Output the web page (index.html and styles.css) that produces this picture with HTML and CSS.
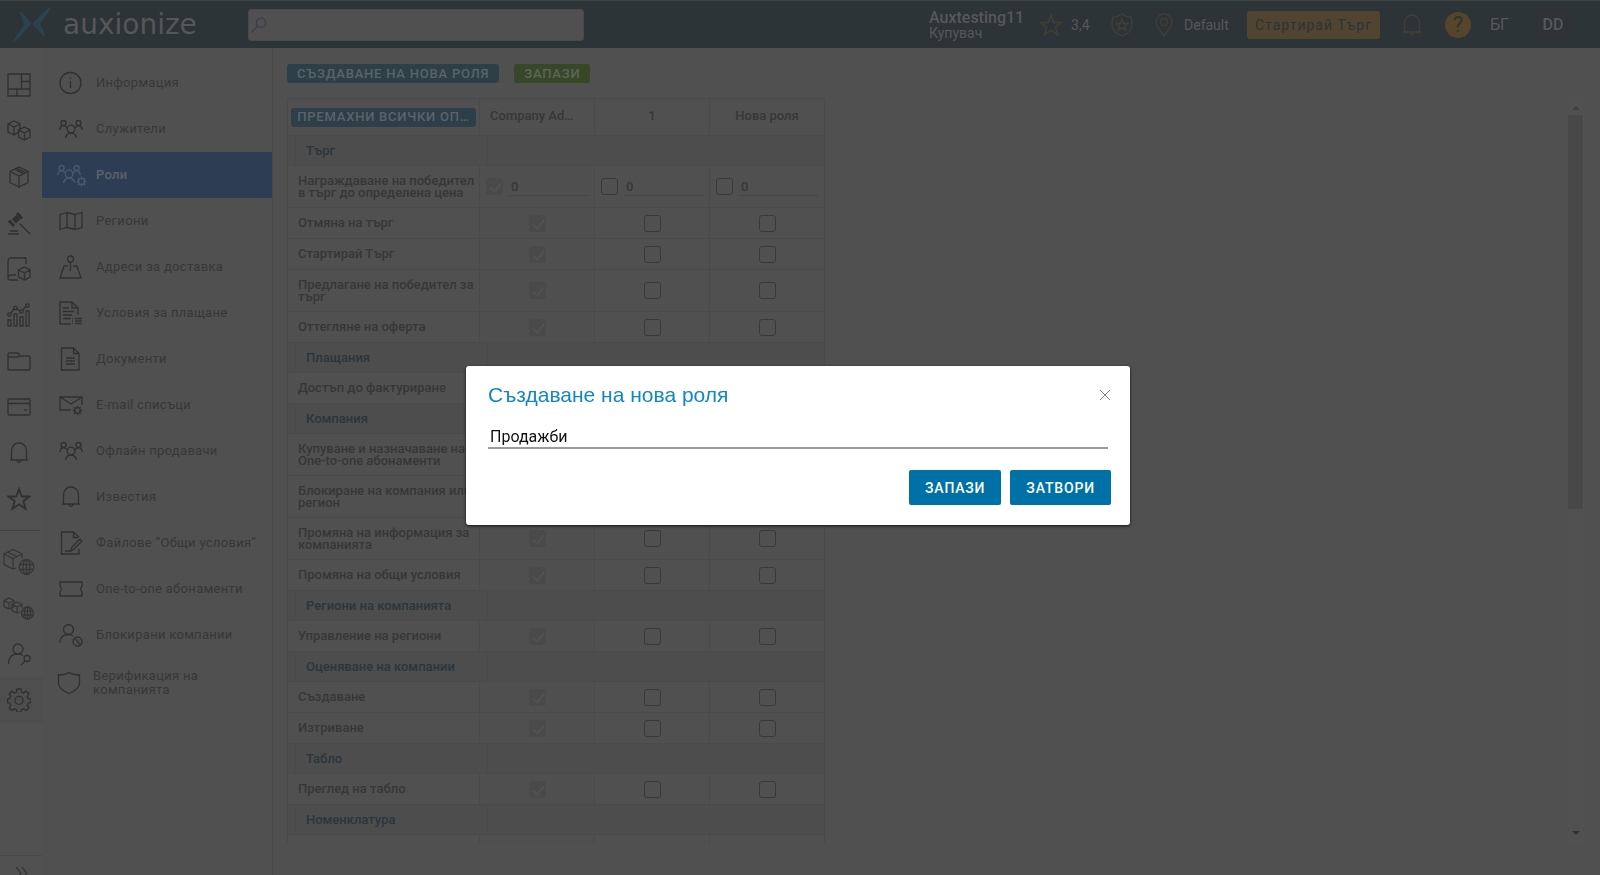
FILE: index.html
```html
<!DOCTYPE html>
<html lang="bg">
<head>
<meta charset="utf-8">
<title>Auxionize – Роли</title>
<link rel="stylesheet" href="styles.css">
</head>
<body>
<svg class="sprite" aria-hidden="true">
  <symbol id="i-grid" viewBox="0 0 24 24"><path d="M1 1h22v22H1zM14.500 1v15M1 16h22M14.500 8.500H23M10 16v7"/></symbol>
  <symbol id="i-cube" viewBox="0 0 24 24"><path d="M12 2l9 4.500v11L12 22l-9-4.500v-11zM3 6.500l9 4.500 9-4.500M12 11v11M7.500 4.200l9 4.500M9.500 3.200l9 4.500"/></symbol>
  <symbol id="i-cubes" viewBox="0 0 24 24"><path d="M7 2l6 3v7l-6 4-6-3V5zM1 5l6 3 6-3M7 8v8M17.500 8l5.500 3v7l-5.500 3-6-3v-7zM11.500 11l6 3 5.500-3M17.500 14v7"/></symbol>
  <symbol id="i-gavel" viewBox="0 0 24 24"><path d="M12.500 12.500L23 23M3 20h8M1 23h11"/><path class="thick" d="M2 9.500l5 5.500M10 2l5 5.500"/><path class="solid" d="M5 8l4.500-4 4 4L9 12.500z"/></symbol>
  <symbol id="i-catalog" viewBox="0 0 24 24"><path d="M19 7V1H4Q1 1 1 4v17q0 2 2 2h8M1 20q1-2 3-2h5M17.500 10l5.500 3v7l-5.500 3-6-3v-7zM11.500 13l6 3 5.500-3M17.500 16v7"/></symbol>
  <symbol id="i-chart" viewBox="0 0 24 24"><path d="M1 17h3v6H1zM7 11h3v12H7zM13 14h3v9h-3zM19 8h3v15h-3zM4 10l3-4M10 6l3 2M16 7l3-4"/><circle cx="2.500" cy="11.500" r="1.700"/><circle cx="8.500" cy="5" r="1.700"/><circle cx="14.500" cy="8.500" r="1.700"/><circle cx="20.500" cy="2.500" r="1.700"/></symbol>
  <symbol id="i-folder" viewBox="0 0 24 24"><path d="M1 20V5q0-1 1-1h9l2 3h9q1 0 1 1v12q0 1-1 1H2q-1 0-1-1zM1 8h10l2-1"/></symbol>
  <symbol id="i-card" viewBox="0 0 24 24"><rect x="1" y="4" width="22" height="16" rx="1"/><path d="M1 8.500h22M17 15h3"/></symbol>
  <symbol id="i-bell" viewBox="0 0 24 24"><path d="M4.500 19V9.500a7.500 7.500 0 0 1 15 0V19M3 19h18M10 19.500q2 4 4 0"/></symbol>
  <symbol id="i-star" viewBox="0 0 24 24"><path d="M12 2l2.700 7.500H22.500l-6.200 4.700 2.300 7.600-6.600-4.500-6.600 4.500 2.300-7.600L1.500 9.500h7.800z"/></symbol>
  <symbol id="i-cubeweb" viewBox="0 0 32 28"><path d="M10 1.500l9 4.500v4M13 20l-3 1-9-4.500V6l9-4.500M1 6l9 4.500L19 6M10 10.500V21M4.500 4l9 4.500"/><circle cx="23.500" cy="19" r="7.300"/><ellipse cx="23.500" cy="19" rx="3.500" ry="7.300"/><path d="M23.500 12v14M17 16.500h13M17 21.500h13"/></symbol>
  <symbol id="i-cubesweb" viewBox="0 0 32 28"><path d="M6 4l5 2.500v6l-5 2.500-5-2.500v-6zM1 6.500l5 2.500 5-2.500M6 9v6M14 8l5 2.500V14M17 18l-3 1-5-2.500v-6L14 8M9 10.500l5 2.500 5-2.500M14 13v6"/><circle cx="24.500" cy="19" r="6"/><ellipse cx="24.500" cy="19" rx="3" ry="6"/><path d="M24.500 13v12M19 17h11M19 21h11"/></symbol>
  <symbol id="i-usersearch" viewBox="0 0 24 24"><circle cx="11" cy="7" r="5"/><path d="M1.500 22q0-10 9.500-10 3 0 5 1.500M14 23l4-4"/><circle cx="20" cy="16.500" r="3"/></symbol>
  <symbol id="i-gear" viewBox="0 0 24 24"><path d="M10 1h4l.6 3 2 .9 2.600-1.700 2.700 2.700-1.700 2.600.8 2 3 .6v3.500l-3 .6-.8 2 1.700 2.600-2.700 2.700-2.600-1.700-2 .9-.6 2.500h-4l-.6-2.500-2-.9-2.600 1.700-2.700-2.700 1.700-2.600-.8-2-2.500-.6v-3.500l2.500-.6.8-2-1.700-2.600 2.700-2.700 2.600 1.700 2-.9z"/><circle cx="12" cy="12.300" r="4"/></symbol>
  <symbol id="i-info" viewBox="0 0 24 24"><circle cx="11.500" cy="12" r="10.500"/><path d="M11.500 10v7M11.500 6.500v1.500"/></symbol>
  <symbol id="i-team" viewBox="0 0 24 24"><circle cx="12" cy="12" r="3.800"/><circle cx="4.500" cy="6" r="2.500"/><circle cx="19.500" cy="6" r="2.500"/><path d="M6.500 21q1-5 5.500-5t5.500 5M.8 13q.5-4.500 3.700-4.500 2 0 3.500 2.500M23.200 13q-.5-4.500-3.700-4.500-2 0-3.500 2.500"/></symbol>
  <symbol id="i-teamgear" viewBox="0 0 30 24"><circle cx="12" cy="11" r="3.800"/><circle cx="4.500" cy="5" r="2.500"/><circle cx="19.500" cy="5" r="2.500"/><path d="M6.500 20q1-5 5.500-5t5.500 4.500M.8 12q.5-4.500 3.700-4.500 2 0 3.500 2.500M23.200 12q-.5-4.500-3.700-4.500-2 0-3.500 2.500"/><circle cx="24.500" cy="18.500" r="3"/><path d="M24.500 13.500v2M24.500 21.500v2M19.500 18.500h2M27.500 18.500h2M21 15l1.400 1.400M26.600 20.600L28 22M28 15l-1.400 1.400M22.400 20.600L21 22"/></symbol>
  <symbol id="i-map" viewBox="0 0 24 24"><path d="M1 5.500l7-2 8 2 7-2v15l-7 2-8-2-7 2zM8 3.500v15M16 5.500v15"/></symbol>
  <symbol id="i-address" viewBox="0 0 24 24"><circle cx="11.500" cy="4" r="3"/><path d="M11.500 7v9M9 11H5L1 23h21l-4-12h-4"/></symbol>
  <symbol id="i-terms" viewBox="0 0 24 24"><path d="M12 23H1V1h12l6 6v7M13 1v6h6M4 7h6M4 10.500h11M4 14h9M4 17.500h8M16 17.500h7M16 20h7M16 22.500h7M13 17.500h1M13 20h1M13 22.500h1"/></symbol>
  <symbol id="i-doc" viewBox="0 0 24 24"><path d="M2.500 1h12L20 6.500V23H2.500zM14.500 1v5.500H20M7 11h9M7 14h9M7 17h9"/></symbol>
  <symbol id="i-mail" viewBox="0 0 24 24"><path d="M12 17H1V4h22v8M1 4l11 7 11-7"/><circle cx="18.500" cy="17.500" r="2.800"/><path d="M18.500 13v2M18.500 20v2M14 17.500h2M21 17.500h2M15.300 14.300l1.400 1.400M20.300 19.300l1.400 1.400M21.700 14.300l-1.400 1.400M16.700 19.300l-1.400 1.400"/></symbol>
  <symbol id="i-edit" viewBox="0 0 24 24"><path d="M20 18v5H2.500V1h12L20 6M14.500 1v5.500H19M6 20h6l1-4 8-8 2 2-8 8-3 2"/></symbol>
  <symbol id="i-ticket" viewBox="0 0 24 24"><path d="M1 5h22v4q-2.500 3 0 6v4H1v-4q2.500-3 0-6z"/></symbol>
  <symbol id="i-block" viewBox="0 0 24 24"><circle cx="9.500" cy="6.500" r="5"/><path d="M1 20q0-8.500 8.500-8.500 3 0 4.500 1.500M15.500 15.500l6 6"/><circle cx="18.500" cy="18.500" r="4.500"/></symbol>
  <symbol id="i-shield" viewBox="0 0 24 24"><path d="M12 1.500Q16 4 22.500 4v8q0 6-10.500 10.500Q1.500 18 1.500 12V4Q8 4 12 1.500z"/></symbol>
  <symbol id="i-badge" viewBox="0 0 24 24"><path d="M12 1q4 3 9 3 2 8 0 12-3 5-9 7-6-2-9-7-2-4 0-12 5 0 9-3z"/><path d="M12 6l1.600 4.300H18l-3.500 2.700 1.300 4.200L12 14.700l-3.800 2.500L9.500 13 6 10.300h4.400z"/></symbol>
  <symbol id="i-pin" viewBox="0 0 24 24"><path d="M12 23Q4 13 4 9a8 8 0 0 1 16 0q0 4-8 14z"/><circle cx="12" cy="9" r="3.500"/></symbol>
  <symbol id="i-search" viewBox="0 0 24 24"><circle cx="15" cy="8.500" r="7"/><path d="M10 13.500L1 23"/></symbol>
  <symbol id="i-more" viewBox="0 0 24 24"><path d="M6 5l6 7-6 7M13 5l6 7-6 7"/></symbol>
  <symbol id="i-close" viewBox="0 0 12 12"><path d="M1 1l10 10M11 1L1 11"/></symbol>
</svg>

<header class="topbar">
  <a class="brand" href="#">
    <svg class="brand-mark" viewBox="0 0 36 34" aria-hidden="true"><path d="M7 5l9 10v1L1 32l10-15z"/><path d="M35 1L20 15v1l10 11-5-11z"/></svg>
    <span>auxionize</span>
  </a>
  <label class="search"><svg class="icon"><use href="#i-search"/></svg><input type="search" aria-label="Търсене"></label>
  <div class="account">
    <div class="company"><strong>Auxtesting11</strong><span>Купувач</span></div>
    <a class="stat rating" href="#"><svg class="icon gold"><use href="#i-star"/></svg>3,4</a>
    <a class="badge" href="#" aria-label="Значка"><svg class="icon gold"><use href="#i-badge"/></svg></a>
    <a class="stat place" href="#"><svg class="icon gold"><use href="#i-pin"/></svg>Default</a>
    <button class="start">Стартирай Търг</button>
    <a class="bell" href="#" aria-label="Известия"><svg class="icon gold"><use href="#i-bell"/></svg></a>
    <button class="help" aria-label="Помощ">?</button>
    <button class="lang">БГ</button>
    <button class="avatar">DD</button>
  </div>
</header>

<div class="layout">
  <nav class="rail" aria-label="Основно меню">
    <a href="#" aria-label="Табло"><svg class="icon"><use href="#i-grid"/></svg></a>
    <a href="#" aria-label="Каталог"><svg class="icon"><use href="#i-cubes"/></svg></a>
    <a href="#" aria-label="Продукти"><svg class="icon"><use href="#i-cube"/></svg></a>
    <a href="#" aria-label="Търгове"><svg class="icon"><use href="#i-gavel"/></svg></a>
    <a href="#" aria-label="Номенклатура"><svg class="icon"><use href="#i-catalog"/></svg></a>
    <a href="#" aria-label="Статистика"><svg class="icon"><use href="#i-chart"/></svg></a>
    <a href="#" aria-label="Файлове"><svg class="icon"><use href="#i-folder"/></svg></a>
    <a href="#" aria-label="Плащания"><svg class="icon"><use href="#i-card"/></svg></a>
    <a href="#" aria-label="Известия"><svg class="icon"><use href="#i-bell"/></svg></a>
    <a href="#" aria-label="Любими"><svg class="icon bold"><use href="#i-star"/></svg></a>
    <hr>
    <a href="#" aria-label="Глобален продукт"><svg class="icon wide"><use href="#i-cubeweb"/></svg></a>
    <a href="#" aria-label="Глобален каталог"><svg class="icon wide"><use href="#i-cubesweb"/></svg></a>
    <a href="#" aria-label="Търсене на компании"><svg class="icon"><use href="#i-usersearch"/></svg></a>
    <a class="current" href="#" aria-label="Настройки"><svg class="icon"><use href="#i-gear"/></svg></a>
    <button class="expand" aria-label="Разгъни"><svg class="icon"><use href="#i-more"/></svg></button>
  </nav>

  <nav class="menu" aria-label="Настройки">
    <a href="#"><svg class="icon"><use href="#i-info"/></svg>Информация</a>
    <a href="#"><svg class="icon"><use href="#i-team"/></svg>Служители</a>
    <a class="active" href="#" aria-current="page"><svg class="icon"><use href="#i-teamgear"/></svg>Роли</a>
    <a href="#"><svg class="icon"><use href="#i-map"/></svg>Региони</a>
    <a href="#"><svg class="icon"><use href="#i-address"/></svg>Адреси за доставка</a>
    <a href="#"><svg class="icon"><use href="#i-terms"/></svg>Условия за плащане</a>
    <a href="#"><svg class="icon"><use href="#i-doc"/></svg>Документи</a>
    <a href="#"><svg class="icon"><use href="#i-mail"/></svg>E-mail списъци</a>
    <a href="#"><svg class="icon"><use href="#i-team"/></svg>Офлайн продавачи</a>
    <a href="#"><svg class="icon"><use href="#i-bell"/></svg>Известия</a>
    <a href="#"><svg class="icon"><use href="#i-edit"/></svg>Файлове “Общи условия”</a>
    <a href="#"><svg class="icon"><use href="#i-ticket"/></svg>One-to-one абонаменти</a>
    <a href="#"><svg class="icon"><use href="#i-block"/></svg>Блокирани компании</a>
    <a class="two-line" href="#"><svg class="icon"><use href="#i-shield"/></svg><span>Верификация на компанията</span></a>
  </nav>

  <main class="content">
    <div class="actions">
      <button class="btn">Създаване на нова роля</button>
      <button class="btn green">Запази</button>
    </div>
    <div class="scroller">
      <div class="viewport">
        <table class="roles">
          <colgroup><col class="c-indent"><col class="c-name"><col class="c-indent"><col class="c-first"><col class="c-role"><col class="c-role"></colgroup>
          <thead>
            <tr><th colspan="2" class="clear"><button class="btn">Премахни всички оп…</button></th><th colspan="2" class="owner">Company Ad…</th><th>1</th><th>Нова роля</th></tr>
          </thead>
          <tbody>
            <tr class="group"><td></td><th colspan="2" scope="rowgroup">Търг</th><td colspan="3"></td></tr>
            <tr class="tall"><th colspan="2" scope="row">Награждаване на победител в търг до определена цена</th>
              <td colspan="2" class="admin"><div class="limit"><input type="checkbox" checked disabled aria-label="Company Admin"><input type="text" value="0" disabled aria-label="Лимит, Company Admin"></div></td>
              <td><div class="limit"><input type="checkbox" aria-label="1"><input type="text" value="0" aria-label="Лимит, 1"></div></td>
              <td><div class="limit"><input type="checkbox" aria-label="Нова роля"><input type="text" value="0" aria-label="Лимит, Нова роля"></div></td></tr>
            <tr><th colspan="2" scope="row">Отмяна на търг</th><td colspan="2" class="admin"><input type="checkbox" checked disabled aria-label="Отмяна, Company Admin"></td><td><input type="checkbox" aria-label="Отмяна, 1"></td><td><input type="checkbox" aria-label="Отмяна, Нова роля"></td></tr>
            <tr><th colspan="2" scope="row">Стартирай Търг</th><td colspan="2" class="admin"><input type="checkbox" checked disabled aria-label="Стартирай, Company Admin"></td><td><input type="checkbox" aria-label="Стартирай, 1"></td><td><input type="checkbox" aria-label="Стартирай, Нова роля"></td></tr>
            <tr class="tall"><th colspan="2" scope="row">Предлагане на победител за търг</th><td colspan="2" class="admin"><input type="checkbox" checked disabled aria-label="Предлагане, Company Admin"></td><td><input type="checkbox" aria-label="Предлагане, 1"></td><td><input type="checkbox" aria-label="Предлагане, Нова роля"></td></tr>
            <tr><th colspan="2" scope="row">Оттегляне на оферта</th><td colspan="2" class="admin"><input type="checkbox" checked disabled aria-label="Оттегляне, Company Admin"></td><td><input type="checkbox" aria-label="Оттегляне, 1"></td><td><input type="checkbox" aria-label="Оттегляне, Нова роля"></td></tr>
            <tr class="group"><td></td><th colspan="2" scope="rowgroup">Плащания</th><td colspan="3"></td></tr>
            <tr><th colspan="2" scope="row">Достъп до фактуриране</th><td colspan="2" class="admin"><input type="checkbox" checked disabled aria-label="Фактуриране, Company Admin"></td><td><input type="checkbox" aria-label="Фактуриране, 1"></td><td><input type="checkbox" aria-label="Фактуриране, Нова роля"></td></tr>
            <tr class="group"><td></td><th colspan="2" scope="rowgroup">Компания</th><td colspan="3"></td></tr>
            <tr class="tall"><th colspan="2" scope="row">Купуване и назначаване на One-to-one абонаменти</th><td colspan="2" class="admin"><input type="checkbox" checked disabled aria-label="Абонаменти, Company Admin"></td><td><input type="checkbox" aria-label="Абонаменти, 1"></td><td><input type="checkbox" aria-label="Абонаменти, Нова роля"></td></tr>
            <tr class="tall"><th colspan="2" scope="row">Блокиране на компания или регион</th><td colspan="2" class="admin"><input type="checkbox" checked disabled aria-label="Блокиране, Company Admin"></td><td><input type="checkbox" aria-label="Блокиране, 1"></td><td><input type="checkbox" aria-label="Блокиране, Нова роля"></td></tr>
            <tr class="tall"><th colspan="2" scope="row">Промяна на информация за компанията</th><td colspan="2" class="admin"><input type="checkbox" checked disabled aria-label="Информация, Company Admin"></td><td><input type="checkbox" aria-label="Информация, 1"></td><td><input type="checkbox" aria-label="Информация, Нова роля"></td></tr>
            <tr><th colspan="2" scope="row">Промяна на общи условия</th><td colspan="2" class="admin"><input type="checkbox" checked disabled aria-label="Общи условия, Company Admin"></td><td><input type="checkbox" aria-label="Общи условия, 1"></td><td><input type="checkbox" aria-label="Общи условия, Нова роля"></td></tr>
            <tr class="group"><td></td><th colspan="2" scope="rowgroup">Региони на компанията</th><td colspan="3"></td></tr>
            <tr><th colspan="2" scope="row">Управление на региони</th><td colspan="2" class="admin"><input type="checkbox" checked disabled aria-label="Региони, Company Admin"></td><td><input type="checkbox" aria-label="Региони, 1"></td><td><input type="checkbox" aria-label="Региони, Нова роля"></td></tr>
            <tr class="group"><td></td><th colspan="2" scope="rowgroup">Оценяване на компании</th><td colspan="3"></td></tr>
            <tr><th colspan="2" scope="row">Създаване</th><td colspan="2" class="admin"><input type="checkbox" checked disabled aria-label="Създаване, Company Admin"></td><td><input type="checkbox" aria-label="Създаване, 1"></td><td><input type="checkbox" aria-label="Създаване, Нова роля"></td></tr>
            <tr><th colspan="2" scope="row">Изтриване</th><td colspan="2" class="admin"><input type="checkbox" checked disabled aria-label="Изтриване, Company Admin"></td><td><input type="checkbox" aria-label="Изтриване, 1"></td><td><input type="checkbox" aria-label="Изтриване, Нова роля"></td></tr>
            <tr class="group"><td></td><th colspan="2" scope="rowgroup">Табло</th><td colspan="3"></td></tr>
            <tr><th colspan="2" scope="row">Преглед на табло</th><td colspan="2" class="admin"><input type="checkbox" checked disabled aria-label="Табло, Company Admin"></td><td><input type="checkbox" aria-label="Табло, 1"></td><td><input type="checkbox" aria-label="Табло, Нова роля"></td></tr>
            <tr class="group"><td></td><th colspan="2" scope="rowgroup">Номенклатура</th><td colspan="3"></td></tr>
            <tr><th colspan="2"></th><td colspan="2" class="admin"></td><td></td><td></td></tr>
          </tbody>
        </table>
      </div>
      <div class="track" aria-hidden="true"><i class="up"></i><i class="thumb"></i><i class="down"></i></div>
    </div>
  </main>
</div>

<div class="overlay">
  <form class="modal" role="dialog" aria-labelledby="modal-title">
    <div class="modal-head">
      <h2 id="modal-title">Създаване на нова роля</h2>
      <button type="button" class="close" aria-label="Затвори прозореца"><svg><use href="#i-close"/></svg></button>
    </div>
    <input class="role-name" type="text" value="Продажби" aria-label="Име на роля">
    <div class="modal-foot">
      <button type="button">Запази</button>
      <button type="button">Затвори</button>
    </div>
  </form>
</div>
</body>
</html>
```
FILE: styles.css
```css
* { box-sizing: border-box; }
html, body { height: 100%; }
body {
  margin: 0;
  display: flex;
  flex-direction: column;
  overflow: hidden;
  background: #505050;
  color: #373737;
  font: 14px/16px Roboto, "Liberation Sans", sans-serif;
}
a { color: inherit; text-decoration: none; }
button, input { font: inherit; color: inherit; border: 0; margin: 0; padding: 0; background: none; }
.sprite { position: absolute; width: 0; height: 0; }
.icon {
  width: 24px;
  height: 24px;
  flex: none;
  fill: none;
  stroke: #303030;
  stroke-width: 1.3;
}
.icon.bold { stroke-width: 1.8; }
.icon.wide { width: 32px; height: 28px; stroke: #363636; }
.icon.gold { stroke: #453f33; }
.thick { stroke-width: 3; }
.solid { fill: #303030; stroke: none; }

.topbar {
  flex: none;
  display: flex;
  align-items: center;
  height: 48px;
  padding: 0 28px 0 14px;
  background: #2c3437;
  border-top: 1px solid #3c4644;
}
.brand {
  display: flex;
  align-items: center;
  gap: 13px;
  width: 234px;
  color: #565758;
  font: 28px/32px "DejaVu Sans", sans-serif;
}
.brand-mark { width: 36px; height: 34px; fill: #2b4350; stroke: #2b4350; stroke-width: 2; stroke-linejoin: round; }
.search {
  display: flex;
  align-items: center;
  width: 336px;
  height: 32px;
  padding: 0 2px;
  background: #505050;
  border: 1px solid #444a4d;
  border-radius: 3px;
}
.search .icon { width: 16px; height: 16px; stroke: #3a404c; stroke-width: 2; }
.search input { flex: 1; min-width: 0; outline: 0; }
.account { margin-left: auto; display: flex; align-items: center; color: #565859; }
.company { display: flex; flex-direction: column; width: 110px; }
.company strong { font-size: 16px; font-weight: 500; }
.company span { line-height: 14px; }
.stat { display: flex; align-items: center; gap: 8px; }
.rating { width: 71px; }
.badge { width: 42px; height: 24px; }
.place { width: 95px; }
.start {
  width: 133px;
  height: 28px;
  border-radius: 3px;
  background: #514430;
  color: #2c3437;
  letter-spacing: 1px;
}
.bell { margin-left: 20px; height: 24px; }
.help {
  width: 26px;
  height: 26px;
  margin-left: 21px;
  border-radius: 50%;
  background: #55452a;
  color: #2c3437;
  font-size: 22px;
  line-height: 26px;
}
.lang { margin-left: 19px; font-size: 16px; }
.avatar {
  width: 38px;
  height: 38px;
  margin-left: 25px;
  border-radius: 50%;
  background: #303335;
  font-size: 16px;
  font-weight: 500;
}

.layout { flex: 1; min-height: 0; display: flex; }
.rail {
  flex: none;
  display: flex;
  flex-direction: column;
  width: 42px;
  padding-top: 14px;
  background: #515151;
}
.rail a { display: flex; align-items: center; justify-content: center; flex: none; height: 46px; padding-right: 4px; }
.rail a.current { background: #4e4e4e; }
.rail hr { width: 40px; margin: 8px 0; border: 0; border-top: 1px solid #434343; flex: none; }
.expand { margin-top: auto; flex: none; height: 20px; border-top: 1px solid #494949; overflow: hidden; }
.expand .icon { width: 20px; height: 24px; margin-top: 5px; }
.menu {
  flex: none;
  width: 231px;
  padding-top: 12px;
  border-right: 1px solid #4a4a4a;
  font-size: 13px;
  letter-spacing: 0.3px;
}
.menu a { display: flex; align-items: center; gap: 13px; height: 46px; padding-left: 17px; }
.menu a.active { background: #2d3e54; color: #5b6269; padding-left: 15px; gap: 9px; font-weight: 500; }
.menu .active .icon { width: 30px; stroke: #4b5a6b; }
.menu a.two-line { height: 50px; padding-left: 15px; padding-right: 50px; gap: 12px; line-height: 14px; }

.content { flex: 1; min-width: 0; display: flex; flex-direction: column; padding: 16px 16px 32px 14px; }
.actions { display: flex; gap: 15px; margin-bottom: 15px; }
.btn {
  height: 19px;
  padding: 0 10px;
  border-radius: 3px;
  background: #2d4049;
  color: #5b6468;
  font-size: 13px;
  font-weight: 500;
  line-height: 18px;
  letter-spacing: 0.06em;
  text-transform: uppercase;
  white-space: nowrap;
}
.btn.green { background: #394729; color: #5d6656; }
.scroller { flex: 1; min-height: 0; display: flex; justify-content: space-between; }
.viewport { overflow: hidden; }
.roles { width: 538px; table-layout: fixed; border-collapse: collapse; font-size: 13px; line-height: 12px; }
.c-indent { width: 8px; }
.c-name { width: 184px; }
.c-first { width: 107px; }
.c-role { width: 115px; }
.roles th, .roles td { height: 31px; padding: 0; border: 1px solid #4a4a4a; text-align: center; font-weight: 500; }
.roles thead th { height: 37px; padding-bottom: 2px; }
.roles thead .clear { padding: 0 3px; }
.roles thead .btn { display: block; width: 100%; padding: 0 4px; }
.roles thead .owner { padding-left: 10px; text-align: left; }
.roles tbody th { padding: 0 0 0 10px; text-align: left; }
.roles .tall > * { height: 42px; }
.roles .group > * { height: 30px; background: #4d4d4d; }
.roles .group th { color: #2b363b; }
.roles .admin { background: #4f4f4f; }
.roles input[type="checkbox"] {
  appearance: none;
  display: block;
  flex: none;
  width: 17px;
  height: 17px;
  margin: 0 auto;
  border: 1px solid #393939;
  border-radius: 3px;
}
.roles input:disabled[type="checkbox"] { border-color: #4a4a4a; background: #4a4a4a; }
.roles input:checked::after {
  content: "";
  display: block;
  width: 5px;
  height: 10px;
  margin: 1px 5px;
  border: solid #525252;
  border-width: 0 2px 2px 0;
  transform: rotate(40deg);
}
.limit { display: flex; align-items: center; gap: 6px; padding: 0 6px; }
.roles .limit input[type="checkbox"] { margin: 0; }
.limit input[type="text"] { flex: 1; min-width: 0; height: 18px; padding-left: 2px; border-bottom: 1px solid #454545; }
.track { display: flex; flex-direction: column; align-items: center; width: 17px; padding: 8px 0; background: #515151; }
.track .up, .track .down { border: solid transparent; border-width: 0 4px 4px; border-bottom-color: #3f3f3f; }
.track .down { margin-top: auto; border-width: 4px 4px 0; border-top-color: #303030; }
.track .thumb { width: 15px; height: 54%; margin-top: 5px; background: #484848; }

.overlay {
  position: fixed;
  inset: 0;
  display: flex;
  align-items: center;
  justify-content: center;
  padding: 16px 4px 0 0;
}
.modal {
  width: 664px;
  max-width: 100%;
  padding: 14px 19px 20px 22px;
  background: #fff;
  border-radius: 3px;
  box-shadow: 0 1px 3px #111;
}
.modal-head { display: flex; align-items: center; justify-content: space-between; }
.modal h2 { margin: 0; color: #1188c3; font: 21px/30px "Liberation Sans", sans-serif; }
.close { width: 12px; height: 12px; }
.close svg { display: block; width: 12px; height: 12px; stroke: #888; fill: none; }
.role-name {
  display: block;
  width: calc(100% - 3px);
  height: 24px;
  margin-top: 15px;
  padding: 0 2px;
  border-bottom: 2px solid #9b9b9b;
  color: #111;
  font-size: 16px;
  outline: 0;
}
.modal-foot { display: flex; justify-content: flex-end; gap: 9px; margin-top: 21px; }
.modal-foot button {
  height: 35px;
  padding: 0 16px;
  border-radius: 2px;
  background: #0071a7;
  color: #fff;
  font-size: 14px;
  font-weight: 500;
  letter-spacing: 0.06em;
  text-transform: uppercase;
}
```
